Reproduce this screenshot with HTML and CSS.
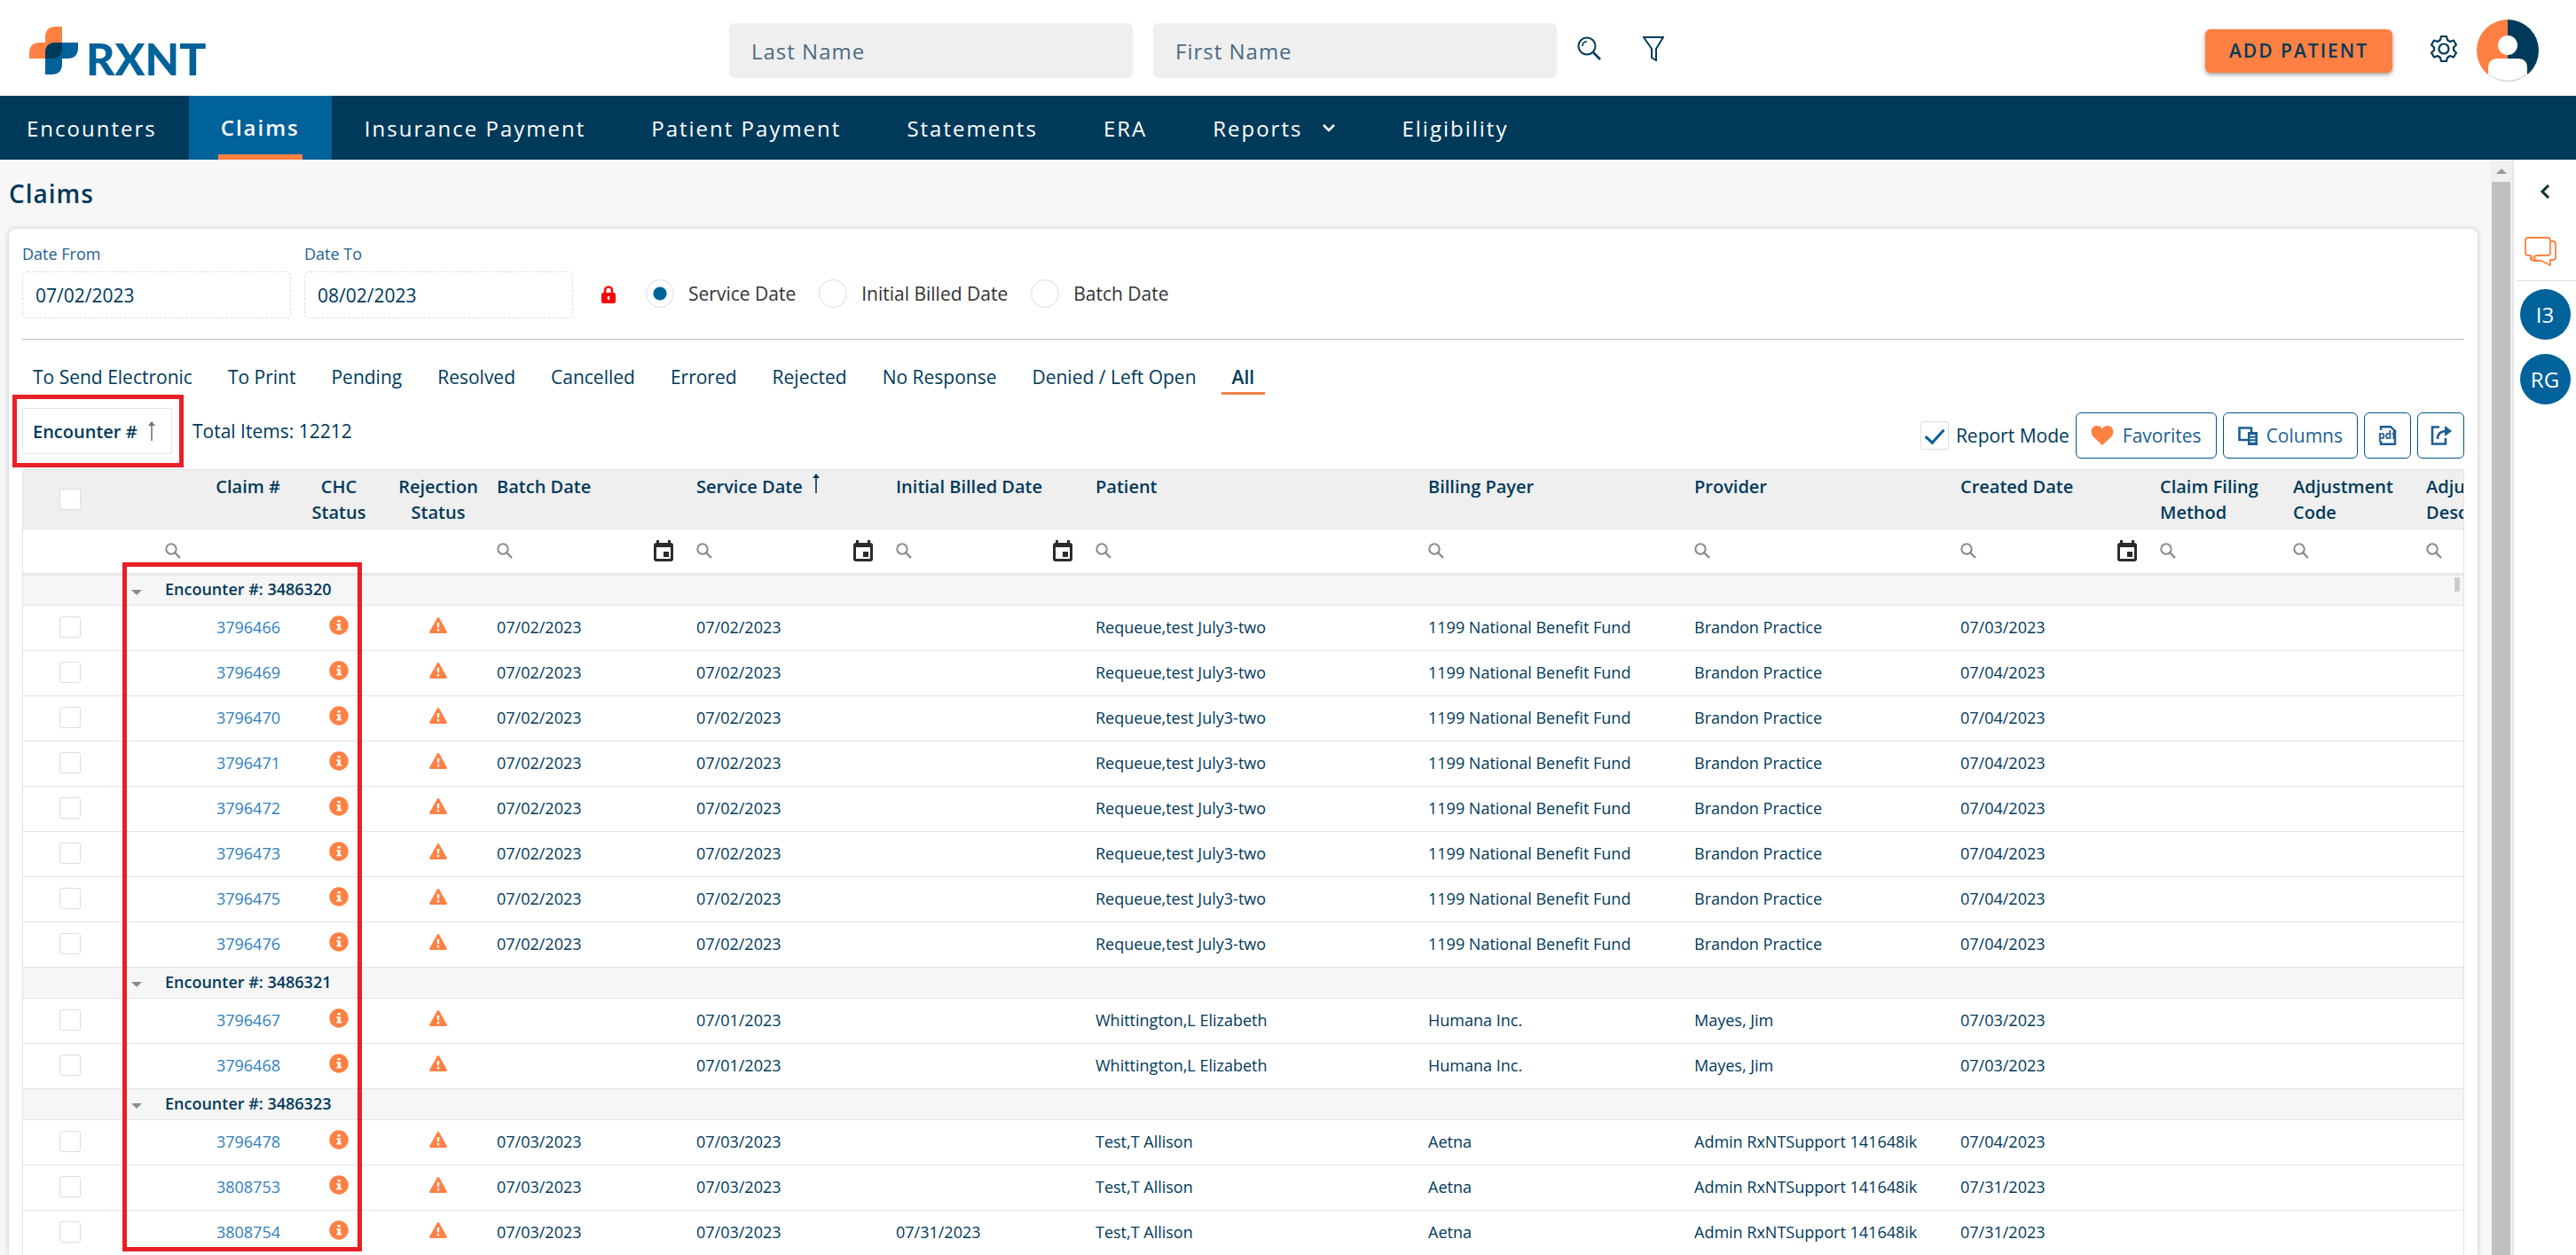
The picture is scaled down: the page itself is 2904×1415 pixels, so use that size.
FILE: index.html
```
<!DOCTYPE html>
<html lang="en">
<head>
    <meta charset="UTF-8">
    <meta name="viewport" content="width=device-width, initial-scale=1.0">
    <title>Claims</title>
    <link rel="stylesheet" href="styles.css">
</head>
<body>
    <!-- icon sprite -->
    <svg class="sprite" aria-hidden="true">
        <symbol id="icon-find" viewBox="0 0 18 18">
            <circle cx="7" cy="7" r="5.7" fill="none" stroke="currentColor" stroke-width="2"/>
            <path d="M11 11l6 6" stroke="currentColor" stroke-width="2.4"/>
        </symbol>
        <symbol id="icon-calendar" viewBox="0 0 22 24">
            <path fill="currentColor" fill-rule="evenodd" d="M3 0h3v3h10V0h3v3a3 3 0 0 1 3 3v15a3 3 0 0 1-3 3H3a3 3 0 0 1-3-3V6a3 3 0 0 1 3-3zM3 8v13h16V8zM11 13h6v6h-6z"/>
        </symbol>
        <symbol id="icon-info" viewBox="0 0 22 22">
            <circle cx="11" cy="11" r="10.7" fill="currentColor"/>
            <path fill="#fff" d="M9.5 5h3.4v2.6H9.5zM8.4 9.2h4.5v5.5h1.3v1.9H8.4v-1.9h1.3v-3.6H8.4z"/>
        </symbol>
        <symbol id="icon-warning" viewBox="0 0 20 18">
            <path fill="currentColor" d="M10 0q.8 0 1.3.9l8.4 15q.7 1.700-1 2.100H1.300q-1.700-.4-1-2.100l8.400-15Q9.200 0 10 0z"/>
            <path fill="#fff" d="M8.6 6h2.8l-.4 5.500H9zM8.800 13h2.400v2.500H8.800z"/>
        </symbol>
        <symbol id="icon-up" viewBox="0 0 8 22">
            <path d="M4 3v19" stroke="currentColor" stroke-width="1.6"/>
            <path d="M4 0l4 5H0z" fill="currentColor"/>
        </symbol>
    </svg>

    <header class="topbar">
        <a class="logo" href="#">
            <svg width="56" height="54" viewBox="0 0 56 54" aria-hidden="true">
                <path fill="#ff8042" d="M18 18V12Q18 0 30 0h7v24q0 12-12 12H0V30Q0 18 12 18z"/>
                <path fill="#00629b" d="M37 18h18v6q0 12-12 12h-6v6q0 12-12 12h-7V30q0-12 12-12z"/>
                <path fill="#003a5a" d="M30 18h7v6q0 12-12 12h-7v-6q0-12 12-12z"/>
            </svg>
            <span>RXNT</span>
        </a>
        <form class="patient-search">
            <input type="text" placeholder="Last Name" aria-label="Last Name">
            <input type="text" placeholder="First Name" aria-label="First Name">
            <button type="button" class="icon-btn" aria-label="Search">
                <svg width="28" height="28" viewBox="0 0 28 28" fill="none" stroke="currentColor" stroke-width="2">
                    <circle cx="11" cy="11" r="9.5"/>
                    <path d="M6 11q0-5 5-5" stroke-width="1.6"/>
                    <path d="M18 18l8 8" stroke-width="2.6"/>
                </svg>
            </button>
            <button type="button" class="icon-btn" aria-label="Filter">
                <svg width="24" height="28" viewBox="0 0 24 28" fill="none" stroke="currentColor" stroke-width="2">
                    <path d="M1 1h22l-8 13v13l-5-3V14z"/>
                </svg>
            </button>
        </form>
        <div class="account">
            <button type="button" class="add-patient">ADD PATIENT</button>
            <button type="button" class="icon-btn" aria-label="Settings">
                <svg width="30" height="32" viewBox="0 0 30 32" fill="none" stroke="currentColor" stroke-width="2.2" stroke-linejoin="round">
                    <path d="M12 2h6l1 4 3 2 4-1.500 3 5-3 3v3l3 3-3 5-4-1.500-3 2-1 4h-6l-1-4-3-2-4 1.500-3-5 3-3v-3l-3-3 3-5L8 8l3-2z"/>
                    <circle cx="15" cy="16" r="5.5"/>
                </svg>
            </button>
            <svg class="avatar" width="72" height="72" viewBox="0 0 72 72" role="img" aria-label="User">
                <path fill="#ff8042" d="M36 1a35 35 0 0 0 0 70z"/>
                <path fill="#003a5a" d="M36 1a35 35 0 0 1 0 70z"/>
                <circle cx="36" cy="30" r="11" fill="#fff"/>
                <path fill="#fff" d="M14 64V56q0-11 11-11h22q11 0 11 11v8Q48 71 36 71T14 64z"/>
                <path fill="none" stroke="#ccd3d9" d="M14 63q22 15 44 0"/>
            </svg>
        </div>
    </header>

    <nav class="main-nav">
        <a href="#">Encounters</a>
        <a href="#" class="active"><span>Claims</span></a>
        <a href="#">Insurance Payment</a>
        <a href="#">Patient Payment</a>
        <a href="#">Statements</a>
        <a href="#">ERA</a>
        <a href="#">Reports
            <svg width="16" height="10" viewBox="0 0 16 10" fill="none" stroke="currentColor" stroke-width="2.5"><path d="M2 2l6 6 6-6"/></svg>
        </a>
        <a href="#">Eligibility</a>
    </nav>

    <div class="workspace">
        <main>
            <h1>Claims</h1>
            <section class="card">
                <div class="date-filters">
                    <label class="date-field">Date From
                        <input type="text" value="07/02/2023">
                    </label>
                    <label class="date-field">Date To
                        <input type="text" value="08/02/2023">
                    </label>
                    <svg class="lock" width="16" height="20" viewBox="0 0 16 20" role="img" aria-label="Locked">
                        <path fill="none" stroke="#f00" stroke-width="2.5" d="M4 9V5.500a4 4 0 0 1 8 0V9"/>
                        <path fill="#f00" fill-rule="evenodd" d="M2 8h12q2 0 2 2v8q0 2-2 2H2q-2 0-2-2v-8q0-2 2-2zM6.800 12v4h2.400v-4z"/>
                    </svg>
                    <div class="date-type">
                        <label><input type="radio" name="dateType" checked>Service Date</label>
                        <label><input type="radio" name="dateType">Initial Billed Date</label>
                        <label><input type="radio" name="dateType">Batch Date</label>
                    </div>
                </div>

                <div class="status-tabs">
                    <a href="#">To Send Electronic</a>
                    <a href="#">To Print</a>
                    <a href="#">Pending</a>
                    <a href="#">Resolved</a>
                    <a href="#">Cancelled</a>
                    <a href="#">Errored</a>
                    <a href="#">Rejected</a>
                    <a href="#">No Response</a>
                    <a href="#">Denied / Left Open</a>
                    <a href="#" class="active">All</a>
                </div>

                <div class="toolbar">
                    <div class="grouping">
                        <button type="button" class="group-chip">Encounter #
                            <svg width="8" height="22"><use href="#icon-up"/></svg>
                            <span class="callout"></span>
                        </button>
                        <span>Total Items: 12212</span>
                    </div>
                    <div class="tools">
                        <label class="report-mode"><input type="checkbox" class="check-lg" checked>Report Mode</label>
                        <button type="button" class="tool-btn">
                            <svg width="26" height="22" viewBox="0 0 26 22"><path fill="#ff8042" d="M13 22L3 12.500C-1 8.500 0 0 6.800 0 10 0 12 1.600 13 3.500 14 1.600 16 0 19.200 0 26 0 27 8.500 23 12.500z"/></svg>
                            Favorites
                        </button>
                        <button type="button" class="tool-btn">
                            <svg width="22" height="21" viewBox="0 0 22 21" fill="none" stroke="currentColor" stroke-width="2.6">
                                <path d="M11 15H1.500V1.500H15V6"/>
                                <path fill="currentColor" stroke="none" d="M11 6h11v15H11z"/>
                                <path stroke="#fff" stroke-width="1.5" d="M13.500 10h6M13.500 13.500h6M13.500 17h6"/>
                            </svg>
                            Columns
                        </button>
                        <button type="button" class="tool-btn square" aria-label="Export to PDF">
                            <svg width="22" height="22" viewBox="0 0 22 22" fill="none" stroke="currentColor" stroke-width="2.4">
                                <path d="M3 5V1.200h11L19 6v14.800H3V17"/>
                                <text x="0" y="15" fill="currentColor" stroke="none">pdf</text>
                            </svg>
                        </button>
                        <button type="button" class="tool-btn square" aria-label="Export">
                            <svg width="24" height="24" viewBox="0 0 24 24" fill="none" stroke="currentColor" stroke-width="2.6">
                                <path d="M10 2.500H2v19h15V15"/>
                                <path d="M8 16q0-9 10-9"/>
                                <path fill="currentColor" stroke="none" d="M16 1l8 6-8 6z"/>
                            </svg>
                        </button>
                    </div>
                </div>

                <div class="grid">
                    <div class="grid-scroll">
                        <table>
                            <colgroup>
                                <col class="w-select"><col class="w-toggle"><col class="w-md"><col class="w-sm"><col class="w-sm">
                                <col class="w-date"><col class="w-date"><col class="w-date"><col class="w-patient">
                                <col class="w-lg"><col class="w-lg"><col class="w-date"><col class="w-md"><col class="w-md"><col class="w-md">
                            </colgroup>
                            <thead>
                                <tr>
                                    <th class="select"><input type="checkbox" aria-label="Select all"></th>
                                    <th></th>
                                    <th class="right">Claim #</th>
                                    <th class="center">CHC Status</th>
                                    <th class="center">Rejection Status</th>
                                    <th>Batch Date</th>
                                    <th>Service Date <svg width="8" height="22"><use href="#icon-up"/></svg></th>
                                    <th>Initial Billed Date</th>
                                    <th>Patient</th>
                                    <th>Billing Payer</th>
                                    <th>Provider</th>
                                    <th>Created Date</th>
                                    <th>Claim Filing Method</th>
                                    <th>Adjustment Code</th>
                                    <th>Adjustment Description</th>
                                </tr>
                                <tr class="filters" id="filters"></tr>
                            </thead>
                            <tbody id="claims"></tbody>
                        </table>
                    </div>
                    <span class="grid-thumb"></span>
                    <span class="callout callout-groups"></span>
                </div>
            </section>
        </main>

        <div class="scrollbar">
            <svg width="12" height="6" viewBox="0 0 12 6"><path fill="#9a9a9a" d="M6 0l6 6H0z"/></svg>
            <div class="thumb"></div>
        </div>

        <aside class="messages">
            <button type="button" class="icon-btn collapse" aria-label="Expand panel">
                <svg width="12" height="16" viewBox="0 0 12 16" fill="none" stroke="#003820" stroke-width="3"><path d="M10 1L3 8l7 7"/></svg>
            </button>
            <button type="button" class="icon-btn chat" aria-label="Messages">
                <svg width="36" height="34" viewBox="0 0 36 34" fill="none" stroke="#ff8042" stroke-width="1.8" stroke-linejoin="round">
                    <path d="M4 1h22q3 0 3 3v14q0 3-3 3H15q-4 0-8 5v-5H4q-3 0-3-3V4q0-3 3-3z"/>
                    <path d="M30 5h2q3 0 3 3v15q0 3-3 3h-3v6l-10-5H9q2-1 4-3"/>
                </svg>
            </button>
            <button type="button" class="user">I3</button>
            <button type="button" class="user">RG</button>
        </aside>
    </div>

    <script>
        const filterCols = ['', '', 'find', '', '', 'date', 'date', 'date', 'find', 'find', 'find', 'date', 'find', 'find', 'find'];

        const requeue = ['07/02/2023', '07/02/2023', '', 'Requeue,test July3-two', '1199 National Benefit Fund', 'Brandon Practice'];
        const whittington = ['', '07/01/2023', '', 'Whittington,L Elizabeth', 'Humana Inc.', 'Mayes, Jim'];
        const allison = ['07/03/2023', '07/03/2023', '', 'Test,T Allison', 'Aetna', 'Admin RxNTSupport 141648ik'];
        const allisonBilled = ['07/03/2023', '07/03/2023', '07/31/2023', 'Test,T Allison', 'Aetna', 'Admin RxNTSupport 141648ik'];

        const groups = [
            { encounter: 3486320, claims: [
                [3796466, ...requeue, '07/03/2023'],
                [3796469, ...requeue, '07/04/2023'],
                [3796470, ...requeue, '07/04/2023'],
                [3796471, ...requeue, '07/04/2023'],
                [3796472, ...requeue, '07/04/2023'],
                [3796473, ...requeue, '07/04/2023'],
                [3796475, ...requeue, '07/04/2023'],
                [3796476, ...requeue, '07/04/2023']
            ] },
            { encounter: 3486321, claims: [
                [3796467, ...whittington, '07/03/2023'],
                [3796468, ...whittington, '07/03/2023']
            ] },
            { encounter: 3486323, claims: [
                [3796478, ...allison, '07/04/2023'],
                [3808753, ...allison, '07/31/2023'],
                [3808754, ...allisonBilled, '07/31/2023']
            ] }
        ];

        function icon(name, w, h) {
            return `<svg class="${name}" width="${w}" height="${h}"><use href="#icon-${name}"/></svg>`;
        }

        document.getElementById('filters').innerHTML = filterCols.map(type => {
            if (!type) return '<td></td>';
            const calendar = type === 'date' ? icon('calendar', 22, 24) : '';
            return `<td><div class="filter">${icon('find', 18, 18)}<input type="text" aria-label="Filter">${calendar}</div></td>`;
        }).join('');

        let rows = '';
        groups.forEach(group => {
            rows += `<tr class="group"><td></td><td class="toggle"><i></i></td><td colspan="13">Encounter #: ${group.encounter}</td></tr>`;
            group.claims.forEach(([id, ...cells]) => {
                rows += `<tr>
                    <td class="select"><input type="checkbox" aria-label="Select ${id}"></td>
                    <td></td>
                    <td class="right"><a href="#">${id}</a></td>
                    <td class="center">${icon('info', 22, 22)}</td>
                    <td class="center">${icon('warning', 20, 18)}</td>
                    ${cells.map(text => `<td>${text}</td>`).join('')}
                    <td></td><td></td><td></td>
                </tr>`;
            });
        });
        document.getElementById('claims').innerHTML = rows;
    </script>
</body>
</html>
```
FILE: styles.css
```
* {
    box-sizing: border-box;
}

body {
    margin: 0;
    height: 100vh;
    overflow: hidden;
    display: flex;
    flex-direction: column;
    font-family: "Open Sans", sans-serif;
    font-size: 20px;
    color: #003a5a;
    background-color: #f7f7f7;
}

a {
    color: inherit;
    text-decoration: none;
}

button, input {
    font: inherit;
    color: inherit;
}

button {
    cursor: pointer;
}

.sprite {
    display: none;
}

.icon-btn {
    display: flex;
    padding: 0;
    border: 0;
    background: none;
}

/* top bar */
.topbar {
    display: grid;
    grid-template-columns: 822px 1fr auto;
    align-items: center;
    height: 108px;
    flex: none;
    padding: 6px 41px 0 0;
    background-color: #fff;
}

.logo {
    display: flex;
    align-items: flex-end;
    gap: 8px;
    padding-left: 33px;
}

.logo span {
    font: 900 50px/36px Lato, sans-serif;
    color: #00629b;
}

.patient-search {
    display: flex;
    align-items: center;
    gap: 23px;
}

.patient-search input {
    width: 455px;
    height: 62px;
    padding: 0 25px;
    border: 0;
    border-radius: 6px;
    background-color: #efefef;
    font-size: 24px;
    letter-spacing: 1px;
}

.patient-search .icon-btn {
    margin-bottom: 4px;
}

.patient-search .icon-btn + .icon-btn {
    margin-left: 23px;
}

.patient-search input::placeholder {
    color: #4a6a83;
}

.account {
    display: flex;
    align-items: center;
}

.account .icon-btn {
    margin-bottom: 4px;
}

.add-patient {
    height: 49px;
    width: 211px;
    margin-right: 43px;
    border: 0;
    border-radius: 6px;
    background-color: #ff8042;
    box-shadow: 0 2px 5px rgba(0, 0, 0, 0.4);
    font-size: 21px;
    font-weight: 600;
    letter-spacing: 2px;
}

.avatar {
    margin-left: 21px;
}

/* navigation */
.main-nav {
    display: flex;
    height: 72px;
    flex: none;
    background-color: #003a5a;
    color: #fff;
    font-size: 24px;
    letter-spacing: 2px;
}

.main-nav a {
    display: flex;
    align-items: center;
    gap: 22px;
    padding: 0 37px;
}

.main-nav a:first-child {
    padding: 0 36px 0 30px;
}

.main-nav .active {
    padding: 0 33px;
    background-color: #00629b;
    font-weight: 600;
}

.main-nav .active span {
    padding: 6px 3px 0;
    border-bottom: 6px solid #ff8042;
    line-height: 60px;
}

/* page */
.workspace {
    display: flex;
    flex: 1;
    min-height: 0;
}

main {
    display: flex;
    flex-direction: column;
    flex: 1;
    min-width: 0;
    padding: 0 15px 0 10px;
}

h1 {
    margin: 0;
    padding-bottom: 2px;
    font-size: 28px;
    font-weight: 600;
    line-height: 76px;
    letter-spacing: 1px;
}

.card {
    flex: 1;
    min-height: 0;
    padding: 14px 15px 0;
    border-radius: 8px 8px 0 0;
    background-color: #fff;
    box-shadow: 0 0 6px rgba(0, 0, 0, 0.2);
}

.date-filters {
    display: flex;
    align-items: flex-end;
    gap: 15px;
    padding-bottom: 23px;
    border-bottom: 1px solid #bfbfbf;
}

.date-field {
    display: flex;
    flex-direction: column;
    gap: 6px;
    font-size: 18px;
    line-height: 28px;
    color: #255f92;
}

.date-field input {
    width: 303px;
    height: 53px;
    padding: 0 14px;
    border: 1px dashed #ddd;
    border-radius: 6px;
    background-color: #fff;
    font-size: 21px;
    color: #003a5a;
}

.lock {
    margin: 0 19px 17px 17px;
}

.date-type {
    display: flex;
    gap: 26px;
    padding-bottom: 12px;
    font-size: 21px;
    line-height: 32px;
    color: #333;
}

.date-type label {
    display: flex;
    align-items: center;
    gap: 16px;
}

.date-type input {
    appearance: none;
    width: 32px;
    height: 32px;
    margin: 0;
    border: 1px solid #ddd;
    border-radius: 50%;
    background-color: #fff;
}

.date-type input:checked {
    background: radial-gradient(circle, #00629b 7px, #fff 8px);
}

.status-tabs {
    display: flex;
    gap: 16px;
    padding-top: 25px;
    font-size: 21px;
    line-height: 34px;
}

.status-tabs a {
    padding: 0 12px;
}

.status-tabs .active {
    border-bottom: 3px solid #f0824a;
    font-weight: 600;
}

.toolbar {
    display: flex;
    align-items: flex-start;
    justify-content: space-between;
    padding: 15px 0 12px;
    font-size: 21px;
}

.grouping {
    display: flex;
    align-items: center;
    gap: 23px;
}

.tools {
    display: flex;
    align-items: center;
    gap: 7px;
    padding-top: 5px;
}

/* highlight frames drawn over the grid */
.callout {
    position: absolute;
    inset: -16px -14px -16px -12px;
    border: 5px solid #e81f27;
    pointer-events: none;
}

.callout-groups {
    inset: 104px auto auto 112px;
    width: 270px;
    height: 777px;
}

.group-chip {
    position: relative;
    display: flex;
    align-items: center;
    justify-content: space-between;
    width: 169px;
    height: 52px;
    padding: 0 18px 0 11px;
    border: 1px solid #e4e6ec;
    background-color: #fff;
    font-size: 20px;
    font-weight: 600;
    white-space: nowrap;
}

.group-chip svg {
    color: #777;
}

.report-mode {
    display: flex;
    align-items: center;
    gap: 8px;
}

.tool-btn {
    display: flex;
    align-items: center;
    justify-content: center;
    gap: 10px;
    height: 52px;
    padding: 0 16px;
    border: 1px solid #00568a;
    border-radius: 6px;
    background-color: #fff;
    color: #1b5f92;
}

.tool-btn.square {
    width: 53px;
    padding: 0;
}

.tool-btn text {
    font: bold 12px "Open Sans", sans-serif;
}

/* tick boxes */
input[type="checkbox"] {
    appearance: none;
    display: block;
    width: 24px;
    height: 24px;
    margin: 0 auto;
    border: 1px solid #ddd;
    border-radius: 3px;
    background-color: #fff;
}

input[type="checkbox"].check-lg {
    width: 32px;
    height: 32px;
}

.check-lg:checked::before {
    content: "";
    display: block;
    width: 9px;
    height: 18px;
    margin: 3px auto;
    border: solid #0b5c94;
    border-width: 0 3px 3px 0;
    transform: rotate(42deg);
}

/* claims grid */
.grid {
    position: relative;
    border: 1px solid #e3e3e3;
}

.grid-scroll {
    overflow: hidden;
}

.grid-thumb {
    position: absolute;
    top: 121px;
    right: 4px;
    width: 6px;
    height: 16px;
    background-color: #ccc;
}

/* columns keep their widths and run past the right edge */
table {
    width: 100%;
    table-layout: fixed;
    border-collapse: collapse;
    font-size: 18px;
}

.w-select { width: 106px; }
.w-toggle { width: 44px; }
.w-sm { width: 112px; }
.w-md { width: 150px; }
.w-date { width: 225px; }
.w-lg { width: 300px; }
.w-patient { width: 375px; }

th, td {
    padding: 0 10px;
    text-align: left;
    border-bottom: 1px solid #e3e3e3;
}

th {
    height: 66px;
    padding: 4px 10px 0;
    background-color: #efefef;
    font-size: 20px;
    font-weight: 600;
    line-height: 29px;
    vertical-align: top;
}

th svg {
    margin-left: 6px;
}

th.select {
    padding-top: 0;
    vertical-align: middle;
}

td {
    height: 51px;
    padding-bottom: 2px;
}

.right {
    text-align: right;
}

.center {
    padding-left: 0;
    padding-right: 0;
    text-align: center;
}

th.center {
    padding: 4px 8px 0;
}

.filters td {
    height: 51px;
    padding-bottom: 0;
    border-bottom: 3px solid #e6e6e6;
}

.filter {
    display: flex;
    align-items: center;
    justify-content: space-between;
}

.filter input {
    flex: 1;
    min-width: 0;
    height: 30px;
    border: 0;
    background: none;
}

.find {
    color: #8a8a8a;
}

.calendar {
    margin-right: 6px;
    color: #2b2b2b;
}

.group td {
    height: 35px;
    background-color: #f6f6f6;
    font-weight: 600;
}

.toggle i {
    display: block;
    width: 12px;
    margin: 7px auto 0;
    border: 6px solid transparent;
    border-top-color: #8c8c8c;
    border-bottom: 0;
}

td a {
    color: #2e80bd;
}

.info, .warning {
    display: block;
    margin: 0 auto 4px;
    color: #ff8042;
}

/* right side */
.scrollbar {
    width: 26px;
    padding: 10px 3px 0 2px;
    background-color: #f0f0f0;
    border-right: 2px solid #e6e6e6;
    display: flex;
    flex-direction: column;
    align-items: center;
    gap: 9px;
}

.scrollbar .thumb {
    flex: 1;
    width: 21px;
    background-color: #c0c0c0;
}

.messages {
    display: flex;
    flex-direction: column;
    align-items: center;
    gap: 16px;
    width: 70px;
    background-color: #fff;
}

.collapse {
    padding: 28px 0 27px;
}

.chat {
    align-self: stretch;
    padding: 0 0 15px 9px;
    margin: 0 0 -7px 3px;
    border-bottom: 1px solid #ddd;
}

.user {
    width: 57px;
    height: 57px;
    padding: 0;
    border: 0;
    border-radius: 50%;
    background-color: #00629b;
    color: #fff;
    font-size: 24px;
}
```
